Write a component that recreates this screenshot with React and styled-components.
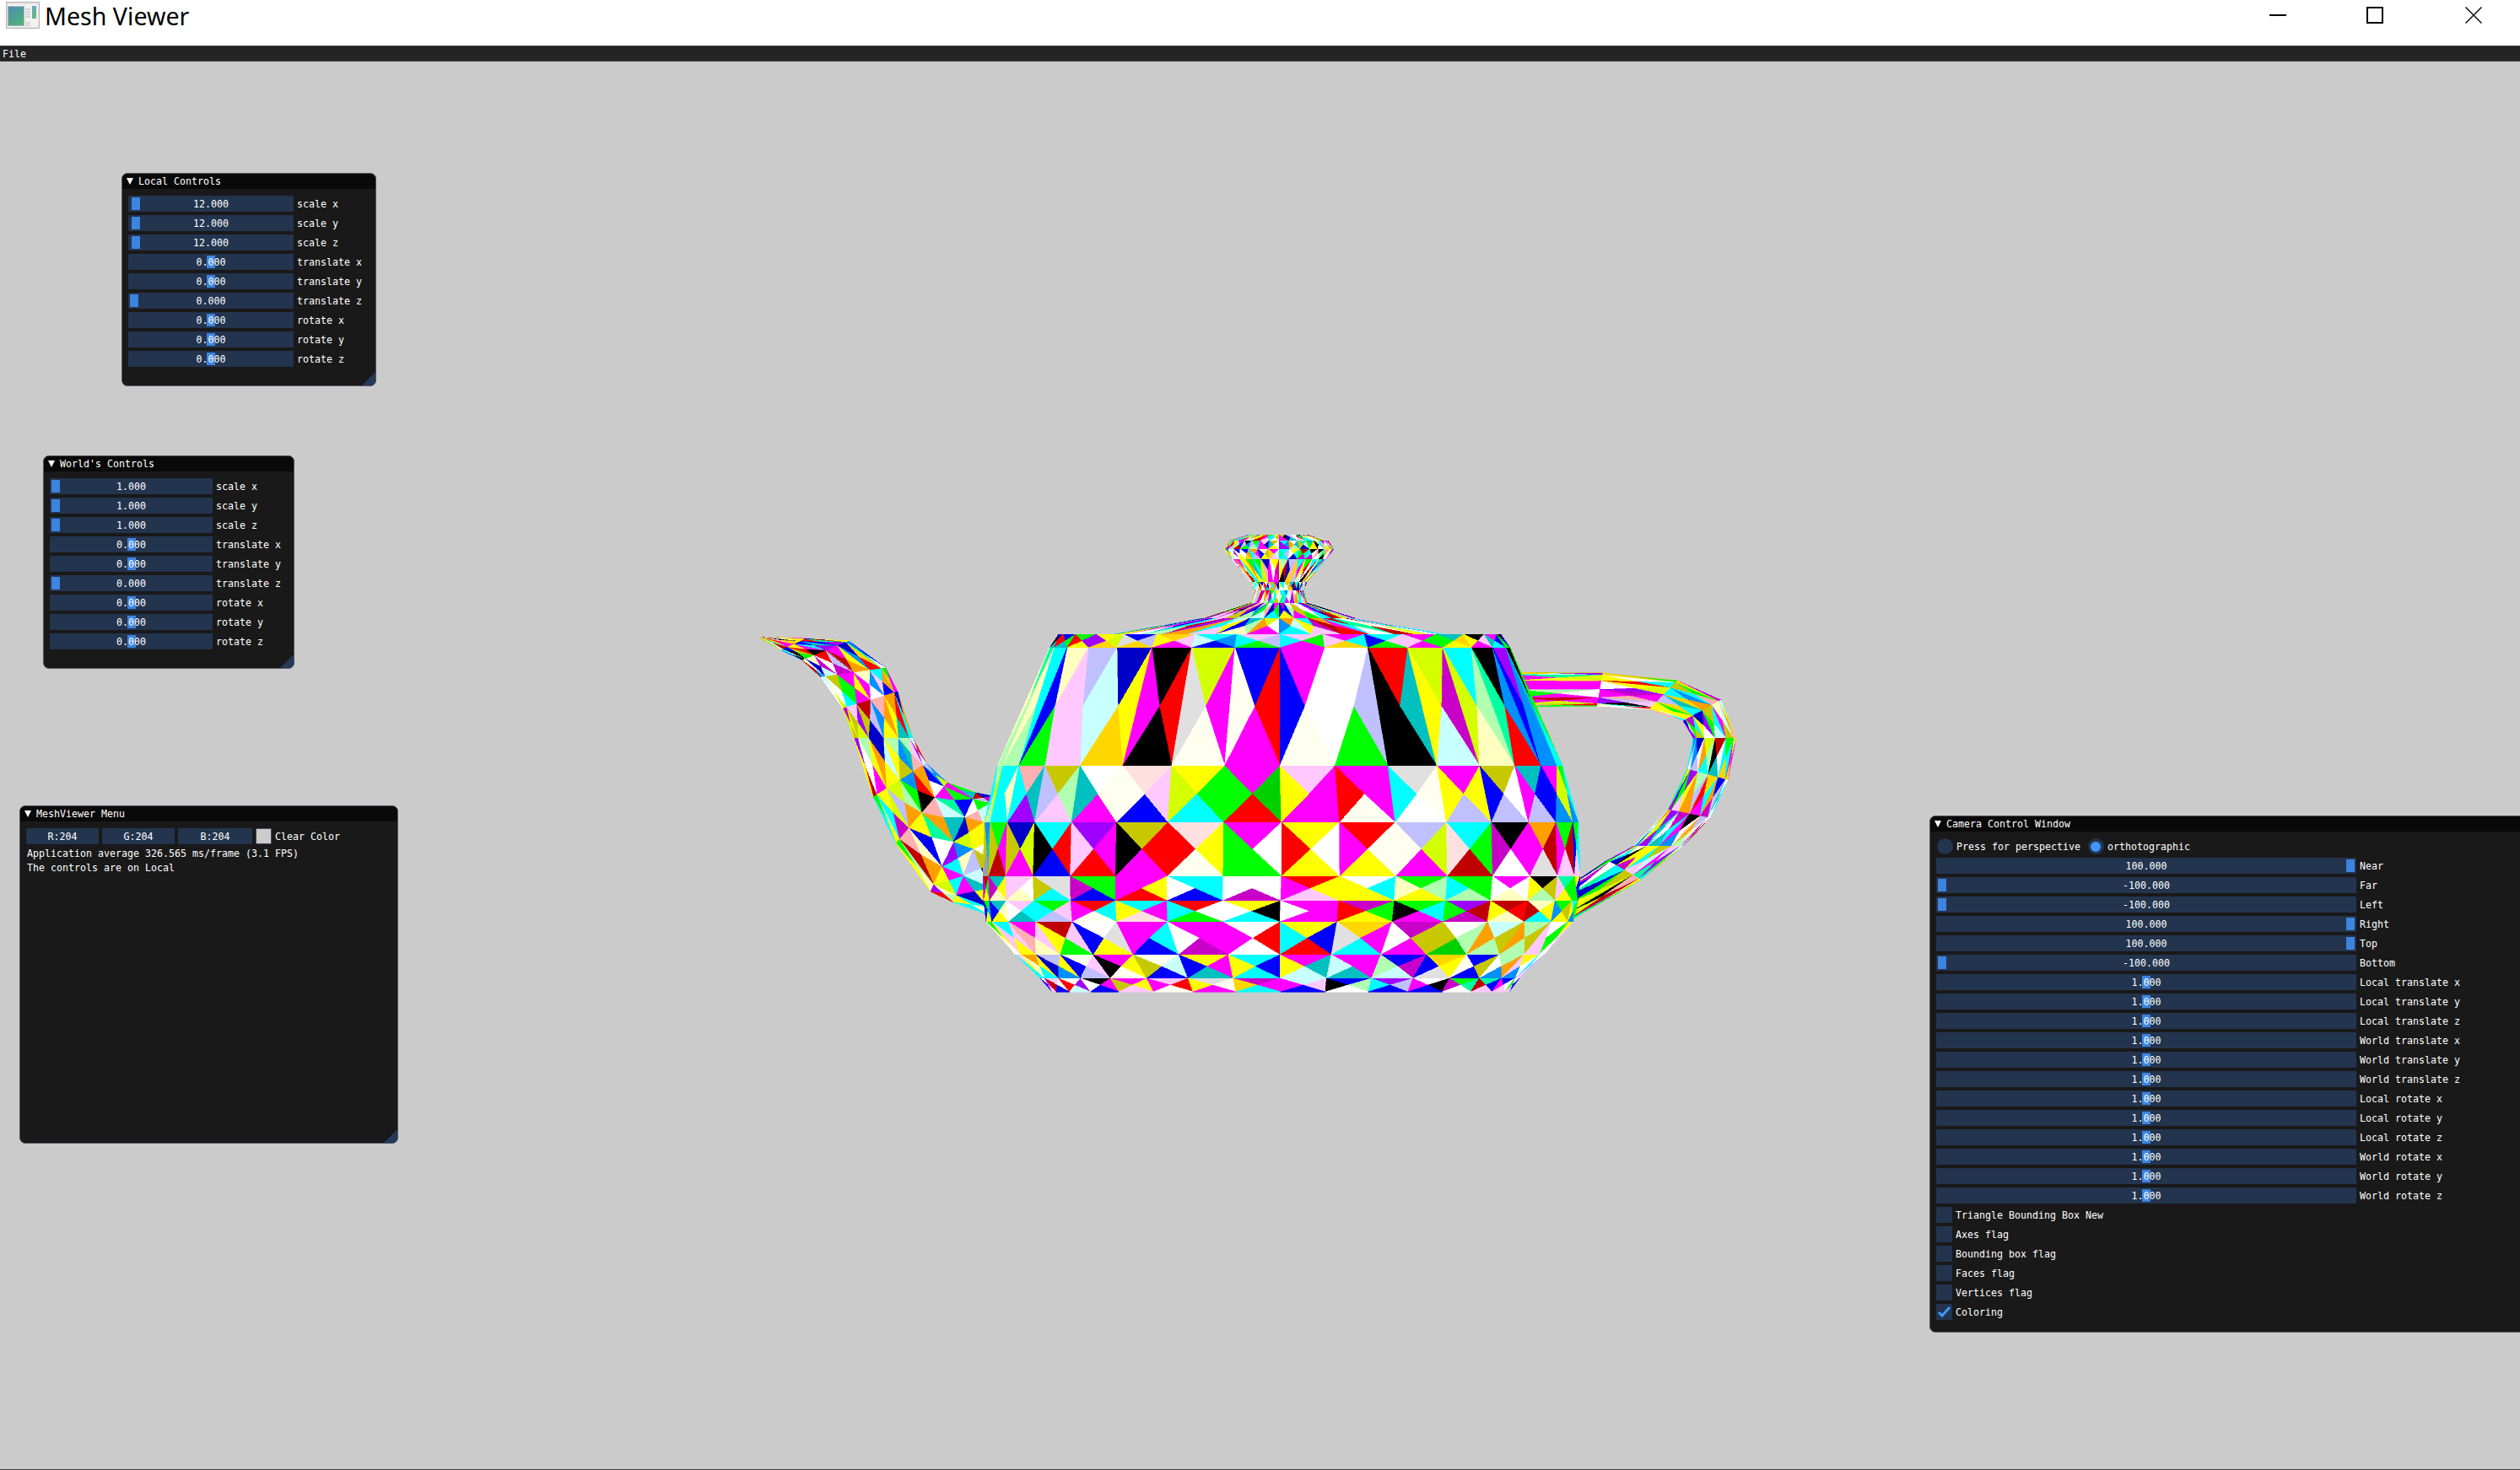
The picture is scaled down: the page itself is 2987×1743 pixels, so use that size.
import React from "react";
import styled, { createGlobalStyle } from "styled-components";

const GlobalStyle = createGlobalStyle`
  html, body {
    margin: 0;
    padding: 0;
    background: #cbcbcb;
  }
`;

const MONO = `"DejaVu Sans Mono", "Liberation Mono", monospace`;

// teapot colours, one letter each
const COLORS = {
  w: "#ffffff", k: "#000000", r: "#ff0000", g: "#00ff00", b: "#0000ff", y: "#ffff00",
  m: "#ff00ff", c: "#00ffff", P: "#ffc8ff", C: "#ffffc0", L: "#c0c0ff", A: "#c8ffff",
  G: "#b0ffb0", S: "#ffb0b0", O: "#ffd700", o: "#ffa000", Y: "#d4ff00", T: "#00c0c0",
  V: "#a000ff", U: "#0090ff", E: "#e0e0e0", D: "#0000c8", R: "#c00000", e: "#c8c800",
  p: "#c800c8", s: "#00ffa0", W: "#fffff0", n: "#00d000", q: "#ffe0e0", a: "#a0a0a0",
};
const RANDOM_POOL = "wwwkrgbyymmccPCLAGOoTVUsYpeSRD";

let seed = 4711;
const pick = () => {
  seed = (seed * 16807) % 2147483647;
  return COLORS[RANDOM_POOL[seed % RANDOM_POOL.length]];
};

// rows of the body: y, centre, radius and the 16 columns below it (top, left, right, bottom)
const BODY = [
  { y: 752, cx: 1517, r: 262, c: "bkrT brgT grVy yVYO bELO OyPm cAUb PcLg Pcgm mPcO cbPg mPgm TgOy kyPm mTbc kgbg" },
  { y: 768, cx: 1517, r: 273, c: "sCGG cCcG CbPg LPAP DAyO kmrk YEmW bWrm mbwW wwLg rkTk YypA cYGC ksUr VbUU kTgc" },
  { y: 908, cx: 1517, r: 335, c: "GcYG ccCc ScTV eLGP wTWm qWPb yYgc mgnr Pymm mrmW EcWw myyL ebwL TmbL mbYU gYcU" },
  { y: 975, cx: 1519, r: 352, c: "UeTa gemR DeYm ckrb VPmr ekrm qryW mgwg yrwy rmWy LWYm cqgR kpmw omRE gmRP gbcP" },
  { y: 1039, cx: 1519, r: 354, c: "Rpgy TpyC PPwC EeEc gpgb mmyr cwcb wwwp rmyP wycy gCGy gcgG mwwC kyeG sPgy ygbg" },
  { y: 1068, cx: 1518, r: 352, c: "gbTy TbCy PwcT gcPL rmcW cymq rcwg ywkc mwmm prgy gkcm VgRp RyrC CRyc gUey cygU" },
  { y: 1093, cx: 1517, r: 348, c: "gCyw cPPy mSPC RyPg wbEy mmcb mwmp wmrw ycbr OEmc pwem weGn AoeG GoeG wPgP ygPw" },
  { y: 1132, cx: 1517, r: 313, c: "Pcyc oCyc LDyU WbPL mkyW WeAb ybmT cybc myTA mAmT bGpA ObyE bWeb GwoU yPwU wcLP" },
  { y: 1160, cx: 1517, r: 284, c: "wbmP PRwb wrVA kwmb meyP PmrW EyWm pOmc AmPb bkGw VcLb wmkb gpsw sRbP bmwP wgbP" },
  { y: 1176, cx: 1518, r: 271 },
];

// lid and knob, read top to bottom
const LID = [
  [634, 36], [641, 58], [651, 65], [663, 56], [690, 33],
  [700, 29], [715, 33], [733, 90], [752, 195],
];

// outer and inner edge of spout and handle
const SPOUT = [
  [[902, 755], [902, 757]],
  [[955, 757], [926, 771]],
  [[1006, 760], [951, 783]],
  [[1050, 792], [973, 803]],
  [[1064, 820], [999, 840]],
  [[1082, 875], [1012, 875]],
  [[1098, 905], [1035, 945]],
  [[1123, 928], [1062, 1000]],
  [[1157, 940], [1103, 1057]],
  [[1177, 944], [1130, 1070]],
  [[1190, 960], [1170, 1084]],
];

const HANDLE = [
  [[1790, 797], [1800, 838]],
  [[1900, 798], [1893, 837]],
  [[1988, 807], [1955, 841]],
  [[2040, 830], [1995, 855]],
  [[2058, 875], [2007, 875]],
  [[2048, 925], [2000, 912]],
  [[2027, 970], [1977, 960]],
  [[1995, 1003], [1937, 1003]],
  [[1945, 1043], [1905, 1020]],
  [[1860, 1092], [1860, 1050]],
];

const Tri = ({ a, b, c, fill }) => (
  <polygon
    points={`${a[0]},${a[1]} ${b[0]},${b[1]} ${c[0]},${c[1]}`}
    fill={fill}
    stroke={fill}
    strokeWidth="0.6"
    shapeRendering="crispEdges"
  />
);

// one quad, crossed into 4 triangles
const quad = (tl, tr, bl, br, fills, key) => {
  const mid = [(tl[0] + tr[0] + bl[0] + br[0]) / 4, (tl[1] + tr[1] + bl[1] + br[1]) / 4];
  return (
    <g key={key}>
      <Tri a={tl} b={tr} c={mid} fill={fills[0]} />
      <Tri a={tl} b={bl} c={mid} fill={fills[1]} />
      <Tri a={tr} b={br} c={mid} fill={fills[2]} />
      <Tri a={bl} b={br} c={mid} fill={fills[3]} />
    </g>
  );
};

const ringPoint = (row, k) => [row.cx + row.r * Math.sin((k * Math.PI) / 16), row.y];

const revolve = (rows, name) => {
  const out = [];
  for (let i = 0; i < rows.length - 1; i++) {
    const cols = rows[i].c ? rows[i].c.split(" ") : null;
    for (let k = -8; k < 8; k++) {
      const code = cols ? cols[k + 8] : null;
      const fills = [0, 1, 2, 3].map((n) => (code ? COLORS[code[n]] : pick()));
      out.push(
        quad(
          ringPoint(rows[i], k),
          ringPoint(rows[i], k + 1),
          ringPoint(rows[i + 1], k),
          ringPoint(rows[i + 1], k + 1),
          fills,
          `${name}-${i}-${k}`
        )
      );
    }
  }
  return out;
};

const tube = (stations, name) => {
  const steps = 6;
  const at = (s, j) => {
    const t = (1 - Math.cos((j / steps) * Math.PI)) / 2;
    return [s[0][0] + (s[1][0] - s[0][0]) * t, s[0][1] + (s[1][1] - s[0][1]) * t];
  };
  const out = [];
  for (let i = 0; i < stations.length - 1; i++) {
    for (let j = 0; j < steps; j++) {
      out.push(
        quad(
          at(stations[i], j),
          at(stations[i + 1], j),
          at(stations[i], j + 1),
          at(stations[i + 1], j + 1),
          [pick(), pick(), pick(), pick()],
          `${name}-${i}-${j}`
        )
      );
    }
  }
  return out;
};

const lidRows = LID.map(([y, r]) => ({ y, cx: 1516, r }));
const TEAPOT = (
  <>
    {tube(SPOUT, "spout")}
    {tube(HANDLE, "handle")}
    {revolve(lidRows, "lid")}
    {revolve(BODY, "body")}
  </>
);

const Page = styled.div`
  width: 2987px;
  height: 1743px;
  display: flex;
  flex-direction: column;
  overflow: hidden;
`;

const TitleBar = styled.header`
  height: 54px;
  flex: none;
  background: #ffffff;
  display: flex;
  align-items: flex-start;
  padding-left: 7px;
  box-sizing: border-box;
`;

const AppIcon = styled.svg`
  width: 40px;
  height: 32px;
  margin-top: 2px;
  flex: none;
`;

const AppTitle = styled.h1`
  margin: -1px 0 0 6px;
  font: 400 28.6px/40px "Noto Sans", "Open Sans", sans-serif;
  color: #000000;
`;

const WindowButtons = styled.div`
  margin-left: auto;
  display: flex;
  align-items: center;
  height: 36px;
  padding-right: 45px;
  gap: 95px;
`;

const CaptionIcon = styled.svg`
  width: 20px;
  height: 20px;
  display: block;
`;

const CloseIcon = styled(CaptionIcon)`
  margin-left: 2px;
`;

const MenuBar = styled.nav`
  height: 19px;
  flex: none;
  box-sizing: border-box;
  background: #242424;
  border-top: 1px solid #46464c;
  border-bottom: 1px solid #46464c;
  color: #ffffff;
  font: 11.63px/19px ${MONO};
  padding-left: 3px;
`;

const Canvas = styled.main`
  flex: 1;
  position: relative;
  overflow: hidden;
  background: #cbcbcb;
  border-bottom: 1px solid #3a3a3a;
`;

const Teapot = styled.svg`
  position: absolute;
  left: 890px;
  top: 547px;
  width: 1180px;
  height: 570px;
`;

const Win = styled.section`
  position: absolute;
  left: ${(p) => p.$x}px;
  top: ${(p) => p.$y - 73}px;
  width: ${(p) => p.$w}px;
  height: ${(p) => p.$h}px;
  box-sizing: border-box;
  border: 1px solid #55555e;
  border-radius: 7px;
  background: #191919;
  overflow: hidden;
  color: #ffffff;
  font: 11.63px/21px ${MONO};
  white-space: pre;
`;

const WinHead = styled.div`
  height: 18px;
  line-height: 19px;
  background: #090909;
  display: flex;
  align-items: center;
  padding-left: 5px;
  gap: 6px;
`;

const Arrow = styled.span`
  width: 0;
  height: 0;
  border-left: 4.5px solid transparent;
  border-right: 4.5px solid transparent;
  border-top: 8px solid #ffffff;
`;

const WinBody = styled.div`
  padding: 8px 7px;
  display: flex;
  flex-direction: column;
  gap: 4px;
`;

const Grip = styled.span`
  position: absolute;
  right: 0;
  bottom: 0;
  width: 16px;
  height: 16px;
  background: #233a5a;
  clip-path: polygon(100% 0, 100% 100%, 0 100%);
`;

const Row = styled.div`
  display: flex;
  height: 19px;
  gap: 4px;
`;

const Frame = styled.div`
  position: relative;
  width: ${(p) => p.$w}px;
  height: 19px;
  background: #23344e;
  text-align: center;
  flex: none;
`;

const Grab = styled.span`
  position: absolute;
  top: 2px;
  height: 15px;
  width: 10px;
  left: calc(2px + (100% - 14px) * ${(p) => p.$pos});
  background: #3d84e0;
`;

const Value = styled.span`
  position: relative;
`;

const ColorField = styled.div`
  width: ${(p) => p.$w}px;
  height: 19px;
  background: #23344e;
  text-align: center;
  flex: none;
`;

const Swatch = styled.div`
  width: 19px;
  height: 19px;
  box-sizing: border-box;
  border: 1px solid #3d4a60;
  background: #cccccc;
  flex: none;
`;

const Line = styled.div`
  height: 13px;
  line-height: 15px;
  padding-left: 1px;
`;

const Circle = styled.span`
  width: 19px;
  height: 19px;
  border-radius: 50%;
  background: #23344e;
  display: flex;
  align-items: center;
  justify-content: center;
  flex: none;
  margin-left: ${(p) => (p.$first ? 1 : 5)}px;
`;

const Dot = styled.span`
  width: 12px;
  height: 12px;
  border-radius: 50%;
  background: #4296fa;
`;

const Box = styled.span`
  width: 19px;
  height: 19px;
  background: #23344e;
  flex: none;
`;

const Check = styled.svg`
  width: 19px;
  height: 19px;
  display: block;
`;

const Slider = ({ label, value, pos, width }) => (
  <Row>
    <Frame $w={width}>
      <Grab $pos={pos} />
      <Value>{value}</Value>
    </Frame>
    <span>{label}</span>
  </Row>
);

const transform = (one, zero) => [
  ["scale x", one, 0.011],
  ["scale y", one, 0.011],
  ["scale z", one, 0.011],
  ["translate x", "0.000", 0.5],
  ["translate y", "0.000", 0.5],
  ["translate z", "0.000", zero],
  ["rotate x", "0.000", 0.5],
  ["rotate y", "0.000", 0.5],
  ["rotate z", "0.000", 0.5],
];

const CAMERA = [
  ["Near", "100.000", 1],
  ["Far", "-100.000", 0],
  ["Left", "-100.000", 0],
  ["Right", "100.000", 1],
  ["Top", "100.000", 1],
  ["Bottom", "-100.000", 0],
  ...[
    "Local translate x", "Local translate y", "Local translate z",
    "World translate x", "World translate y", "World translate z",
    "Local rotate x", "Local rotate y", "Local rotate z",
    "World rotate x", "World rotate y", "World rotate z",
  ].map((name) => [name, "1.000", 0.5]),
];

const FLAGS = ["Triangle Bounding Box New", "Axes flag", "Bounding box flag", "Faces flag", "Vertices flag", "Coloring"];

const ImWindow = ({ title, x, y, w, h, grip, children }) => (
  <Win $x={x} $y={y} $w={w} $h={h}>
    <WinHead>
      <Arrow />
      <span>{title}</span>
    </WinHead>
    <WinBody>{children}</WinBody>
    {grip && <Grip />}
  </Win>
);

const App = () => (
  <Page>
    <GlobalStyle />
    <TitleBar>
      <AppIcon viewBox="0 0 40 32">
        <defs>
          <linearGradient id="screen" x1="0" y1="0" x2="0.6" y2="1">
            <stop offset="0" stopColor="#4a8db5" />
            <stop offset="1" stopColor="#4fb07c" />
          </linearGradient>
          <linearGradient id="strip" x1="0" y1="0" x2="0" y2="1">
            <stop offset="0" stopColor="#6aa8b8" />
            <stop offset="1" stopColor="#66b880" />
          </linearGradient>
        </defs>
        <rect x="0.5" y="0.5" width="39" height="31" fill="#e2e2e2" stroke="#b4b4b4" />
        <rect x="2" y="3" width="36" height="27" fill="#f2f2f2" />
        <rect x="2.5" y="5.5" width="19" height="23" fill="url(#screen)" stroke="#b8b8b8" />
        <path d="M23 9h6M23 12h6M23 15h6M23 18h6M23 25h6M23 28h6" stroke="#b8b8b8" strokeWidth="1" />
        <rect x="31" y="5" width="5" height="15" fill="url(#strip)" />
      </AppIcon>
      <AppTitle>Mesh Viewer</AppTitle>
      <WindowButtons>
        <CaptionIcon viewBox="0 0 20 20">
          <path d="M0 10h20" stroke="#000" strokeWidth="2" />
        </CaptionIcon>
        <CaptionIcon viewBox="0 0 20 20">
          <rect x="1" y="1" width="18" height="18" fill="none" stroke="#000" strokeWidth="2" />
        </CaptionIcon>
        <CloseIcon viewBox="0 0 20 20">
          <path d="M0.5 0.5L19.5 19.5M19.5 0.5L0.5 19.5" stroke="#111" strokeWidth="1.5" />
        </CloseIcon>
      </WindowButtons>
    </TitleBar>
    <MenuBar>File</MenuBar>
    <Canvas>
      <Teapot viewBox="890 620 1180 570">{TEAPOT}</Teapot>

      <ImWindow title="Local Controls" x={144} y={205} w={302} h={253} grip>
        {transform("12.000", 0).map(([label, value, pos]) => (
          <Slider key={label} label={label} value={value} pos={pos} width={196} />
        ))}
      </ImWindow>

      <ImWindow title="World's Controls" x={51} y={540} w={298} h={253} grip>
        {transform("1.000", 0).map(([label, value, pos]) => (
          <Slider key={label} label={label} value={value} pos={label.startsWith("scale") ? 0 : pos} width={193} />
        ))}
      </ImWindow>

      <ImWindow title="MeshViewer Menu" x={23} y={955} w={449} h={401} grip>
        <Row>
          <ColorField $w={86}>R:204</ColorField>
          <ColorField $w={86}>G:204</ColorField>
          <ColorField $w={88}>B:204</ColorField>
          <Swatch />
          <span>Clear Color</span>
        </Row>
        <Line>Application average 326.565 ms/frame (3.1 FPS)</Line>
        <Line>The controls are on Local</Line>
      </ImWindow>

      <ImWindow title="Camera Control Window" x={2287} y={967} w={720} h={613}>
        <Row>
          <Circle $first />
          <span>Press for perspective</span>
          <Circle>
            <Dot />
          </Circle>
          <span>orthotographic</span>
        </Row>
        {CAMERA.map(([label, value, pos]) => (
          <Slider key={label} label={label} value={value} pos={pos} width={498} />
        ))}
        {FLAGS.map((name) => (
          <Row key={name}>
            <Box>
              {name === "Coloring" && (
                <Check viewBox="0 0 19 19">
                  <path d="M3 10l4 4 9-10" fill="none" stroke="#4296fa" strokeWidth="3" />
                </Check>
              )}
            </Box>
            <span>{name}</span>
          </Row>
        ))}
      </ImWindow>
    </Canvas>
  </Page>
);

export default App;
